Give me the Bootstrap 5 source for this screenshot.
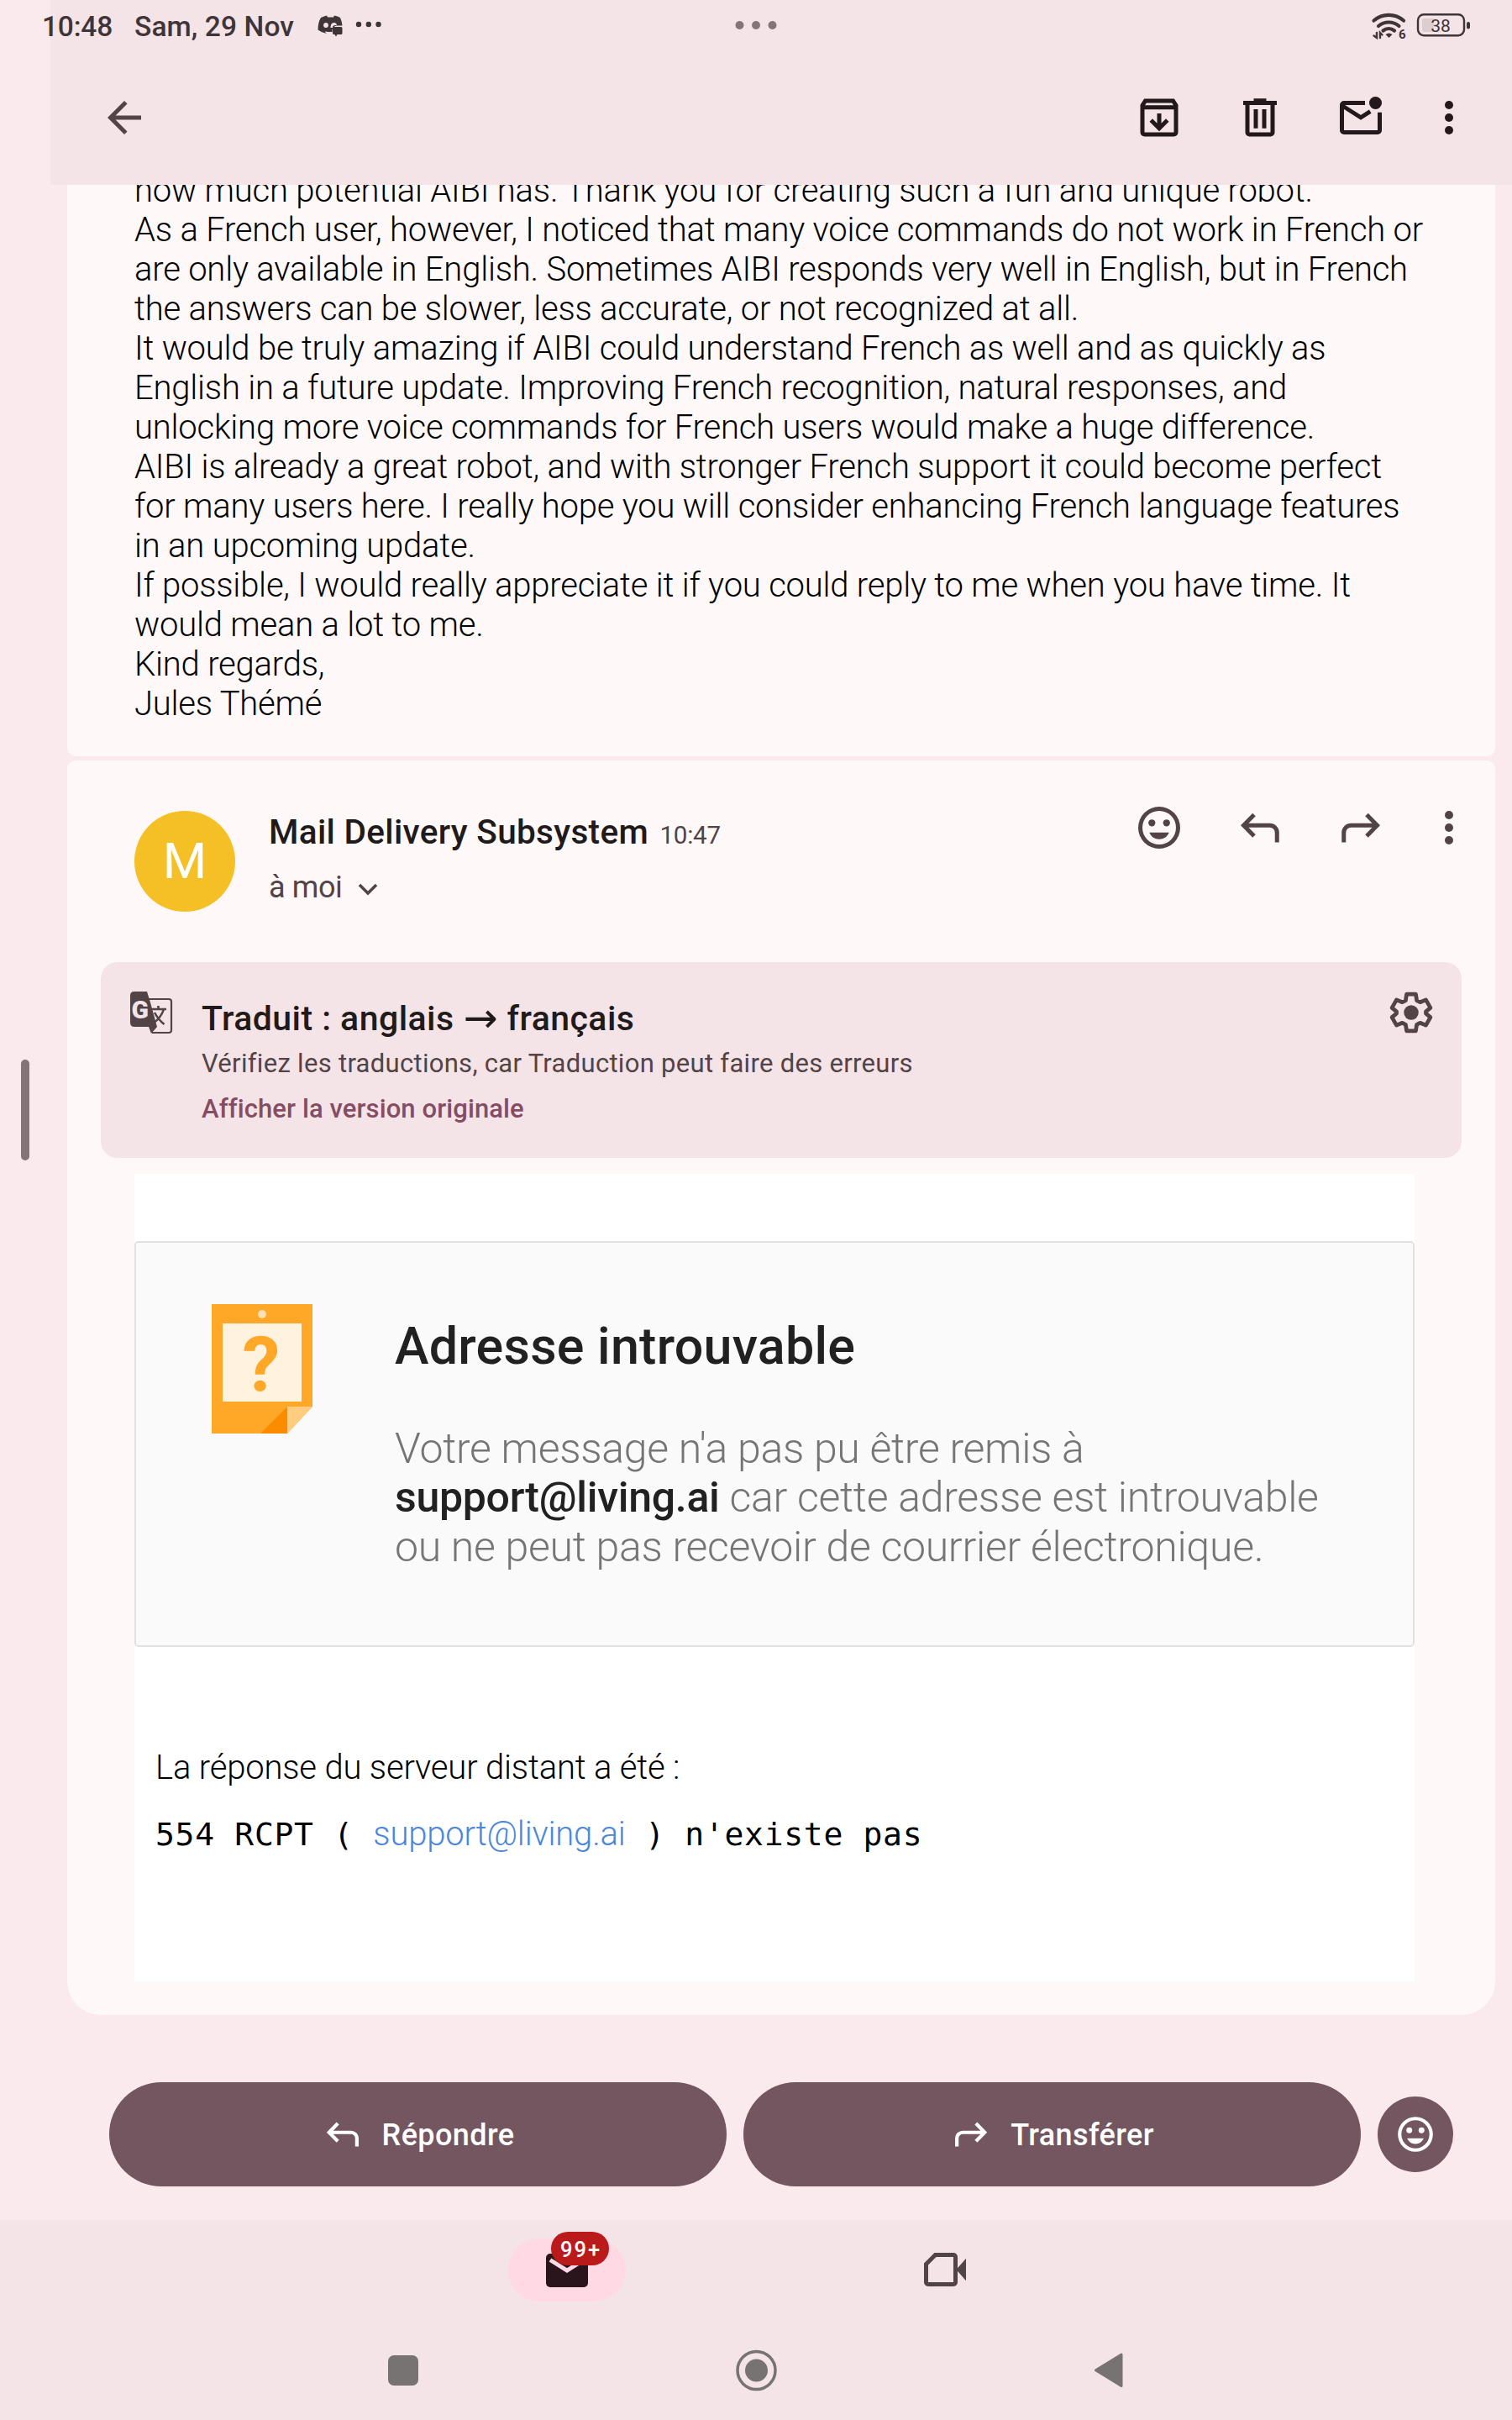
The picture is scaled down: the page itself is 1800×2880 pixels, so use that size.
<!DOCTYPE html>
<html lang="fr">
<head>
<meta charset="utf-8">
<meta name="viewport" content="width=device-width, initial-scale=1">
<title>Adresse introuvable</title>
<link href="https://cdn.jsdelivr.net/npm/bootstrap@5.3.0/dist/css/bootstrap.min.css" rel="stylesheet">
<style>
  body { width:1800px; height:2880px; background:#faeaed; font-family:Roboto,"Liberation Sans",sans-serif; color:#000; }
  svg { display:block; flex:none; }
  .screen { width:1800px; height:2880px; overflow:hidden; }
  .upper { height:2642px; }
  .rail { flex:none; width:60px; padding:1261px 0 0 25px; }
  .rail-handle { width:10px; height:120px; border-radius:5px; background:#857378; }
  .pane { flex:none; width:1740px; }

  .topbar { height:220px; background:#f4e4e7; color:#23181b; }
  .status { height:60px; color:#3f3437; font-weight:500; font-size:33.5px; line-height:40px; padding:12px 50px 0 0; }
  .status svg { margin-top:-1px; }
  .clock { margin-left:-10px; width:110px; letter-spacing:-.2px; }
  .status-date { width:191px; white-space:nowrap; letter-spacing:.1px; }
  .status-note { margin-left:18px; }
  .status-dots { margin-left:416px; }
  .toolbar { height:160px; padding:50px 45px 0 58px; }
  .tools { gap:60px; }
  .tools svg:last-child { margin-left:-15px; }

  .thread { padding:0 20px; height:2178px; overflow:hidden; }
  .msg { background:#fff8f8; }
  .msg-old { margin-top:-17px; padding:0 80px 39px; border-radius:0 0 10px 10px; font-weight:300; font-size:40px; line-height:47px; letter-spacing:-.21px; white-space:nowrap; }
  .msg-new { margin-top:5px; height:1493px; border-radius:10px 10px 40px 40px; }
  .msg-head { height:240px; padding:50px 25px 0 80px; color:#524346; }
  .avatar { width:120px; height:120px; border-radius:50%; background:#f5bf26; color:#fff; font-size:60px; margin-top:10px; }
  .sender { margin:11px 0 0 40px; }
  .sender-name { font-size:40.5px; line-height:48px; font-weight:500; letter-spacing:.32px; color:#201a1b; white-space:nowrap; }
  .sender-time { font-size:29.5px; letter-spacing:-.2px; color:#524346; font-weight:400; margin-left:3px; }
  .sender-to { font-size:36px; line-height:44px; margin-top:16px; letter-spacing:-.4px; }

  .trans { margin:0 40px; height:233px; border-radius:20px; background:#f4e4e7; padding:30px 30px 0; color:#524346; }
  .trans-text { margin:12px 0 0 30px; }
  .trans-title { font-size:41px; line-height:50px; height:50px; font-weight:500; letter-spacing:.45px; color:#201a1b; white-space:nowrap; }
  .trans-arrow { width:40px; height:50px; margin:0 12px 0 11px; font-family:"DejaVu Sans",sans-serif; font-size:49px; font-weight:400; letter-spacing:0; }
  .trans-note { font-size:31px; line-height:40px; margin-top:9px; letter-spacing:.3px; }
  .trans-link { font-size:31px; line-height:40px; margin-top:14px; font-weight:500; letter-spacing:.1px; color:#854c63; }

  .paper { margin:19px 96px 0 80px; height:961px; padding-top:80px; background:#fff; }
  .bounce { height:483px; border:2px solid #e0e0e0; border-radius:5px; background:#fafafa; padding:73px 0 0 90px; }
  .bounce-text { margin:15px 0 0 98px; white-space:nowrap; }
  .bounce-title { font-size:61px; line-height:70px; font-weight:500; letter-spacing:.25px; color:#212121; margin:0 0 58px; }
  .bounce-body { font-size:50px; line-height:58.4px; font-weight:300; letter-spacing:-.28px; color:#757575; margin:0; }
  .bounce-body b { font-weight:500; color:#212121; }
  .answer { padding:120px 0 0 25px; font-size:40px; line-height:47px; font-weight:300; letter-spacing:-.18px; white-space:nowrap; }
  .server { margin-top:32px; height:47px; }
  .mono { font-family:"DejaVu Sans Mono",monospace; font-weight:400; font-size:38px; letter-spacing:.7px; white-space:pre; }
  .server a { color:#4a86d9; text-decoration:none; }

  .replies { height:244px; padding:80px 70px 0; gap:20px; }
  .reply-btn { flex:none; width:735px; height:124px; border-radius:62px; background:#735660; color:#fff; font-size:36px; font-weight:500; letter-spacing:.4px; padding:1px 0 0; }
  .reply-btn svg { margin:-1px 22px 0 0; }
  .react-btn { flex:none; width:90px; height:90px; margin-top:17px; border-radius:50%; background:#735660; }
  .lower { height:238px; background:#f4e4e7; }
  .tabs { height:119px; padding:22px 0 0 605px; }
  .tab-mail { width:140px; height:75px; border-radius:38px; background:#ffd9e3; }
  .count { position:absolute; left:51px; top:-8px; width:69px; height:40px; border-radius:20px; background:#ba1a1a; color:#fff; font-size:25.5px; font-weight:500; letter-spacing:2px; padding:2px 0 0 2px; }
  .tab-meet { margin:7px 0 0 350px; }
  .keys { height:119px; padding-top:29px; padding-left:450px; }
</style>
<script src="https://cdn.jsdelivr.net/npm/bootstrap@5.3.0/dist/js/bootstrap.bundle.min.js"></script>
</head>
<body>
<svg width="0" height="0" class="d-none">
  <symbol id="i-smile" viewBox="0 0 24 24"><path fill-rule="evenodd" d="M12 2a10 10 0 1 0 0 20 10 10 0 0 0 0-20zm0 2a8 8 0 1 1 0 16 8 8 0 0 1 0-16z"/><circle cx="8.500" cy="9.700" r="1.650"/><circle cx="15.500" cy="9.700" r="1.650"/><path d="M7.300 14.300h9.400C15.900 16.300 14.100 17.500 12 17.500s-3.900-1.200-4.700-3.200z"/></symbol>
  <symbol id="i-reply" viewBox="0 0 24 24"><path fill="none" stroke="currentColor" stroke-width="2" d="M9.200 5.800 4.200 10.900l5 5.100M4.500 10.900h12.200a3.400 3.400 0 0 1 3.400 3.400v4.700"/></symbol>
  <symbol id="i-forward" viewBox="0 0 24 24"><path fill="none" stroke="currentColor" stroke-width="2" d="M14.800 5.800l5 5.100-5 5.100M19.500 10.900H7.300a3.400 3.400 0 0 0-3.400 3.400v4.700"/></symbol>
  <symbol id="i-dots" viewBox="0 0 24 24"><circle cx="12" cy="6" r="2"/><circle cx="12" cy="12" r="2"/><circle cx="12" cy="18" r="2"/></symbol>
</svg>
<div class="screen d-flex flex-column">
  <div class="upper d-flex">
    <div class="rail"><div class="rail-handle"></div></div>
    <div class="pane">
      <header class="topbar">
        <div class="status d-flex">
          <div class="clock">10:48</div>
          <div class="status-date">Sam, 29 Nov</div>
          <svg class="status-note" width="90" height="40" viewBox="370 11 90 40" fill="#3f3437">
            <path d="M383 21q4-2 7-2.500l1 2h7l1-2q4 .5 7 2.500 2 4.500 2.500 9.500h-7q-4 1-5 5v2.500h-4l-5-.5 2.500 2.500q-6-1-10.500-4.500 0-9 3.500-14.500z"/>
            <circle cx="389" cy="30" r="2.900" fill="#f4e4e7"/>
            <path d="M394.500 33q0-6 4-6 3 0 3.500 3h-2q-3 0-3 3z" fill="#f4e4e7"/>
            <path d="M398.500 32h8.500q1.500 0 1.500 1.500v6q0 1.500-1.500 1.500h-4.500l-1.500 2.500-1.500-2.500h-1q-1.500 0-1.500-1.500v-6q0-1.500 1.500-1.500z"/>
            <circle cx="428" cy="29" r="3.200"/><circle cx="439.800" cy="29" r="3.200"/><circle cx="451.500" cy="29" r="3.200"/>
          </svg>
          <svg class="status-dots" width="50" height="40" viewBox="875 11 50 40" fill="#857378"><circle cx="880.500" cy="30" r="5"/><circle cx="900" cy="30" r="5"/><circle cx="919.500" cy="30" r="5"/></svg>
          <svg class="ms-auto" width="120" height="40" viewBox="1630 11 120 40" overflow="visible">
            <g fill="none" stroke="#3f3437" stroke-linecap="round">
              <path stroke-width="4.200" d="M1635.500 24.500a27 27 0 0 1 35.500 0"/>
              <path stroke-width="4.200" d="M1641 31a19 19 0 0 1 24.500 0"/>
              <path stroke-width="4.200" d="M1646.500 36.500a11 11 0 0 1 13.500 0"/>
              <path stroke-width="2.400" d="M1639 39v6l-3.500-2.500M1643 45v-6l2.500 2.500"/>
            </g>
            <path fill="#3f3437" d="M1649.500 41q4-3 8 0l-4 4z"/>
            <text x="1665" y="45.500" font-size="15" font-weight="700" fill="#3f3437">6</text>
            <rect x="1688" y="17.200" width="55" height="25" rx="7" fill="none" stroke="#3f3437" stroke-width="2.400"/>
            <path fill="#dccdd0" d="M1696 22h11v16h-11q-3 0-3-3v-10q0-3 3-3z"/>
            <rect x="1746" y="26" width="4" height="8.500" rx="2" fill="#3f3437"/>
            <text x="1715" y="37.500" font-size="21" font-weight="400" text-anchor="middle" fill="#3f3437">38</text>
          </svg>
        </div>
        <div class="toolbar d-flex justify-content-between">
          <svg width="60" height="60" viewBox="0 0 24 24" fill="#524346"><path d="M20 11H7.830l5.590-5.590L12 4l-8 8 8 8 1.410-1.410L7.830 13H20z"/></svg>
          <div class="tools d-flex">
            <svg width="60" height="60" viewBox="0 0 24 24" fill="none" stroke="#23181b" stroke-width="2"><path d="M4 6.200v12.800a1 1 0 0 0 1 1h14a1 1 0 0 0 1-1V6.200L18.600 4H5.400zM4 7.100h16"/><path d="M12 10v6.500M8.100 13.200l3.900 3.900 3.900-3.900"/></svg>
            <svg width="60" height="60" viewBox="0 0 24 24" fill="none" stroke="#23181b" stroke-width="2"><path d="M4 5h16M9 3.900h6"/><path d="M6 4v15a1 1 0 0 0 1 1h10a1 1 0 0 0 1-1V4M10 8v9.100M14 8v9.100"/></svg>
            <svg width="60" height="60" viewBox="0 0 24 24" fill="none" stroke="#23181b" stroke-width="2"><path d="M14 5H4a1 1 0 0 0-1 1v12a1 1 0 0 0 1 1h16a1 1 0 0 0 1-1v-8.500"/><path d="M3 6.200l9 5.700 4.500-2.850"/><circle cx="19" cy="5" r="3" fill="#23181b" stroke="none"/></svg>
            <svg width="60" height="60" fill="#23181b"><use href="#i-dots"/></svg>
          </div>
        </div>
      </header>

      <main class="thread">
        <article class="msg msg-old">how much potential AIBI has. Thank you for creating such a fun and unique robot.<br>As a French user, however, I noticed that many voice commands do not work in French or<br>are only available in English. Sometimes AIBI responds very well in English, but in French<br>the answers can be slower, less accurate, or not recognized at all.<br>It would be truly amazing if AIBI could understand French as well and as quickly as<br>English in a future update. Improving French recognition, natural responses, and<br>unlocking more voice commands for French users would make a huge difference.<br>AIBI is already a great robot, and with stronger French support it could become perfect<br>for many users here. I really hope you will consider enhancing French language features<br>in an upcoming update.<br>If possible, I would really appreciate it if you could reply to me when you have time. It<br>would mean a lot to me.<br>Kind regards,<br>Jules Thémé</article>

        <article class="msg msg-new">
          <div class="msg-head d-flex">
            <div class="avatar d-flex align-items-center justify-content-center">M</div>
            <div class="sender">
              <div class="sender-name">Mail Delivery Subsystem <span class="sender-time">10:47</span></div>
              <div class="sender-to d-flex">à moi
                <svg width="30" height="44" viewBox="0 0 30 44" class="ms-3" fill="none" stroke="#524346" stroke-width="3.600"><path d="M5 19l10 10 10-10"/></svg>
              </div>
            </div>
            <div class="tools d-flex ms-auto">
              <svg width="60" height="60" fill="#524346"><use href="#i-smile"/></svg>
              <svg width="60" height="60"><use href="#i-reply"/></svg>
              <svg width="60" height="60"><use href="#i-forward"/></svg>
              <svg width="60" height="60" fill="#524346"><use href="#i-dots"/></svg>
            </div>
          </div>

          <section class="trans d-flex">
            <svg width="60" height="60" viewBox="0 0 60 60">
              <path fill="none" stroke="#524346" stroke-width="2.200" d="M27 14h24q3 0 3 3v34q0 3-3 3H31"/>
              <path fill="#524346" d="M10 5h15l4 13 8 29-7 8-3-8H10q-5 0-5-5V10q0-5 5-5z"/>
              <path fill="none" stroke="#524346" stroke-width="2.600" d="M31 26h17M38.500 22v4M45 26q-3 10-13 17M34 30q4 8 11.500 14"/>
              <text x="6.500" y="36.500" font-size="30" font-weight="900" fill="#f4e4e7">G</text>
            </svg>
            <div class="trans-text">
              <div class="trans-title d-flex"><span>Traduit : anglais</span><span class="trans-arrow">→</span><span>français</span></div>
              <div class="trans-note">Vérifiez les traductions, car Traduction peut faire des erreurs</div>
              <div class="trans-link">Afficher la version originale</div>
            </div>
            <svg class="ms-auto" width="60" height="60" viewBox="0 0 24 24" fill="none" stroke="#524346" stroke-width="2" stroke-linejoin="round"><path d="M9.700 2.700h4.600l.5 3.200 1.700.9 2.900-1.200 2.300 4-2.300 1.900v1l2.300 1.900-2.300 4-2.900-1.200-1.700.9-.5 3.200H9.700l-.5-3.200-1.700-.9-2.900 1.200-2.300-4 2.300-1.900v-1l-2.300-1.900 2.300-4 2.900 1.200 1.700-.9z" transform="translate(.66 .66) scale(.945)"/><circle cx="12" cy="12" r="3.500" fill="#524346" stroke="none"/></svg>
          </section>

          <section class="paper">
            <div class="bounce d-flex">
              <svg width="120" height="154" viewBox="0 0 120 154">
                <path fill="#ffa726" d="M0 0h120v122l-30 32H0z"/>
                <path fill="#fb8c00" d="M90 122v32H58z"/><path fill="#ffcc80" d="M90 122h30l-30 32z"/>
                <rect x="13" y="23" width="94" height="93" fill="#fff3e0"/><circle cx="60" cy="12" r="5" fill="#ffe0b2"/>
                <text x="59" y="103" font-size="90" font-weight="700" text-anchor="middle" fill="#ffa726">?</text>
              </svg>
              <div class="bounce-text">
                <h1 class="bounce-title">Adresse introuvable</h1>
                <p class="bounce-body">Votre message n'a pas pu être remis à<br><b>support@living.ai</b> car cette adresse est introuvable<br>ou ne peut pas recevoir de courrier électronique.</p>
              </div>
            </div>
            <div class="answer">
              <div>La réponse du serveur distant a été :</div>
              <div class="server"><span class="mono">554 RCPT ( </span><a href="#">support@living.ai</a><span class="mono"> ) n'existe pas</span></div>
            </div>
          </section>
        </article>
      </main>

      <div class="replies d-flex">
        <button class="btn reply-btn d-flex align-items-center justify-content-center"><svg width="50" height="50"><use href="#i-reply"/></svg>Répondre</button>
        <button class="btn reply-btn d-flex align-items-center justify-content-center"><svg width="50" height="50"><use href="#i-forward"/></svg>Transférer</button>
        <div class="react-btn d-flex align-items-center justify-content-center"><svg width="50" height="50" fill="#fff"><use href="#i-smile"/></svg></div>
      </div>
    </div>
  </div>

  <footer class="lower">
    <nav class="tabs d-flex align-items-start">
      <div class="tab-mail position-relative d-flex align-items-center justify-content-center">
        <svg width="60" height="60" viewBox="0 0 24 24"><rect x="2" y="4" width="20" height="16" rx="2" fill="#2b151c"/><path fill="none" stroke="#ffd9e3" stroke-width="2" d="M4 7l8 5 8-5"/></svg>
        <span class="count d-flex align-items-center justify-content-center">99+</span>
      </div>
      <svg class="tab-meet" width="60" height="60" viewBox="0 0 24 24"><path fill="none" stroke="#524346" stroke-width="2" d="M7.400 5H16a1 1 0 0 1 1 1v12a1 1 0 0 1-1 1H4a1 1 0 0 1-1-1V9.400z"/><path fill="#524346" d="M17.800 11.500l4.200-4.800v10.600l-4.200-4.800z"/></svg>
    </nav>
    <div class="keys d-flex">
      <svg width="900" height="60" viewBox="450 2790 900 60" fill="#787373">
        <rect x="462" y="2803" width="36" height="36" rx="7"/>
        <circle cx="900.500" cy="2821" r="22.500" fill="none" stroke="#787373" stroke-width="3.500"/><circle cx="900.500" cy="2821" r="13.500"/>
        <path stroke="#787373" stroke-width="3" stroke-linejoin="round" d="M1335 2802v37.500l-30.500-18.700z"/>
      </svg>
    </div>
  </footer>
</div>
</body>
</html>
